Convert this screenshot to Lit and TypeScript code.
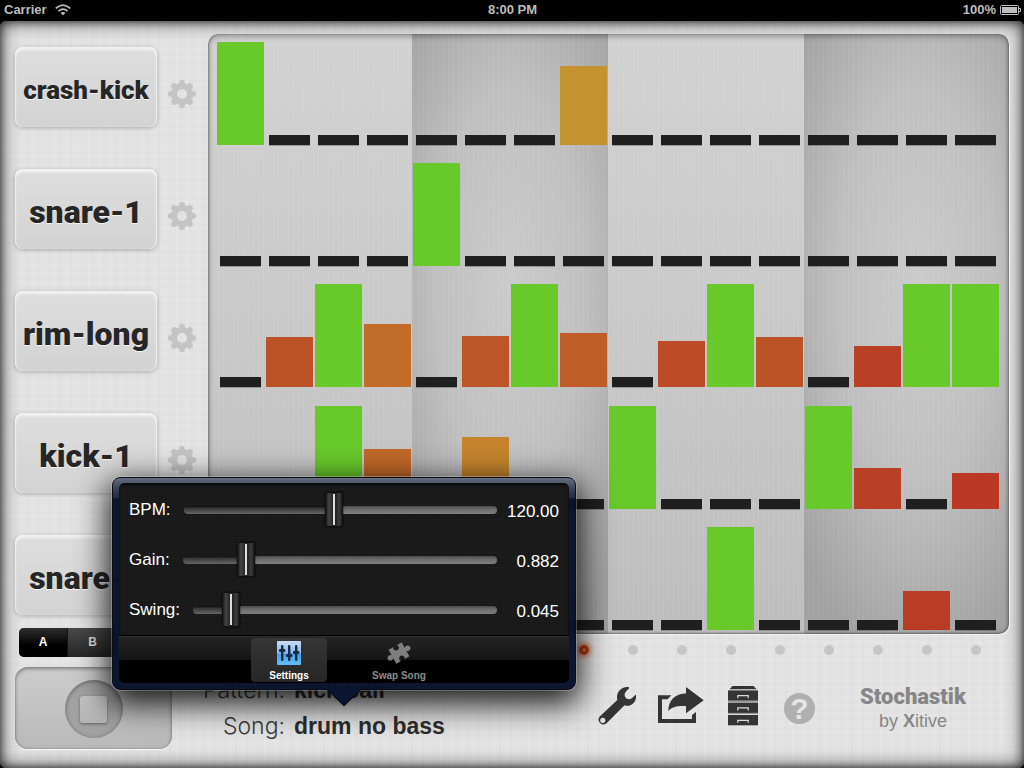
import { LitElement, html, svg, css } from "lit";
import { customElement, property, state } from "lit/decorators.js";
import { styleMap } from "lit/directives/style-map.js";
import { classMap } from "lit/directives/class-map.js";

type Step = { height: number; color: string };
type Track = { name: string; small?: boolean; steps: Record<number, Step> };

const FULL: Step = { height: 103, color: "#68c92a" };
const step = (height: number, color: string): Step => ({ height, color });

const TRACKS: Track[] = [
  { name: "crash-kick", small: true, steps: { 0: FULL, 7: step(79, "#c59230") } },
  { name: "snare-1", steps: { 4: FULL } },
  {
    name: "rim-long",
    steps: {
      1: step(50, "#bc5326"),
      2: FULL,
      3: step(63, "#c16c29"),
      5: step(51, "#bc5527"),
      6: FULL,
      7: step(54, "#be5d27"),
      9: step(46, "#bd4b25"),
      10: FULL,
      11: step(50, "#bc5326"),
      13: step(41, "#b94025"),
      14: FULL,
      15: FULL,
    },
  },
  {
    name: "kick-1",
    steps: {
      2: FULL,
      3: step(60, "#c16829"),
      5: step(72, "#c5842d"),
      8: FULL,
      12: FULL,
      13: step(41, "#b94025"),
      15: step(36, "#bb3825"),
    },
  },
  { name: "snare-2", steps: { 10: FULL, 14: step(39, "#b93c24") } },
];

const COLUMNS = Array.from({ length: 16 }, (_, i) => i);

const gearIcon = html`<svg viewBox="-14 -14 28 28" width="28" height="28" aria-hidden="true">
  <g fill="#c4c4c4">
    ${[0, 45, 90, 135, 180, 225, 270, 315].map(
      (a) => svg`<rect x="-2.8" y="-14" width="5.6" height="7" rx="2" transform="rotate(${a})" />`
    )}
    <path fill-rule="evenodd" d="M0-11A11 11 0 1 1 0 11A11 11 0 1 1 0-11ZM0-5A5 5 0 1 0 0 5A5 5 0 1 0 0-5Z" />
  </g>
</svg>`;

const wrenchIcon = html`<svg viewBox="0 0 38 38" width="38" height="38" aria-hidden="true">
  <path
    fill="#343434"
    fill-rule="evenodd"
    d="M31 .3C24-1 17.500 5 19.300 13L1.500 29.800A4.900 4.900 0 0 0 8.300 36.600L26.500 18.300C32.500 20.500 39 15.500 38 7.600L33.500 11.500Q31 13 28.500 11.500Q26 9.500 26.800 6.500Q27.500 4.500 31 1.600ZM4.800 30.700A2.600 2.600 0 1 1 4.800 35.900A2.600 2.600 0 1 1 4.800 30.700Z"
  />
</svg>`;

const shareIcon = html`<svg viewBox="0 0 46 38" width="46" height="38" aria-hidden="true">
  <g fill="#343434">
    <path d="M0 8.300H13.500L9.500 12.300H4V32H34V28L38 25V36H0Z" />
    <path d="M28 0L45.700 13.300L28 26.300V19C20 18.500 14 19.500 10.300 24C10.500 13 17 6.500 28 6.500Z" />
  </g>
</svg>`;

const cabinetIcon = html`<svg viewBox="0 0 34 40" width="34" height="40" aria-hidden="true">
  <path fill="#343434" d="M6.500 0H27.500L30.500 3.200H3.500Z" />
  ${[4.4, 16.6, 29].map(
    (y) => svg`<g transform="translate(2 ${y})">
      <rect width="30" height="10.300" fill="#343434" />
      <path d="M9.800 7.800V5.300H20.200V7.800" fill="none" stroke="#dcdcdc" stroke-width="1.200" />
    </g>`
  )}
  <path stroke="#8e8e8e" d="M2 15.300H32M2 27.600H32" />
</svg>`;

const mixerIcon = html`<svg viewBox="0 0 24 24" width="24" height="24" aria-hidden="true">
  <defs>
    <linearGradient id="mix" x1="0" y1="0" x2="0" y2="1">
      <stop offset="0" stop-color="#c9dcf6" />
      <stop offset=".5" stop-color="#86b9f0" />
      <stop offset=".55" stop-color="#4c9fea" />
      <stop offset="1" stop-color="#62bdf7" />
    </linearGradient>
  </defs>
  <rect width="24" height="24" rx="1" fill="url(#mix)" />
  <g fill="#182c48">
    <rect x="4" y="4" width="2.400" height="16" rx="1" />
    <rect x="11" y="4" width="2.400" height="16" rx="1" />
    <rect x="18" y="4" width="2.400" height="16" rx="1" />
    <rect x="2" y="8" width="6.400" height="3" rx="1" />
    <rect x="9" y="13" width="6.400" height="3" rx="1" />
    <rect x="16" y="10" width="6.400" height="3" rx="1" />
  </g>
</svg>`;

const puzzleIcon = html`<svg viewBox="0 0 28 24" width="28" height="24" aria-hidden="true">
  <path
    fill="#7e7e7e"
    transform="translate(14 12) rotate(-29)"
    d="M-7.500-8H-1.800A2.700 2.700 0 1 0 1.800-8H7.500V-1.500A2.800 2.800 0 1 1 7.500 1.500V8H1.800A2.700 2.700 0 1 0-1.800 8H-7.500V1.500A2.800 2.800 0 1 1-7.500-1.500Z"
  />
</svg>`;

const resets = css`
  * {
    box-sizing: border-box;
  }
  button {
    margin: 0;
    padding: 0;
    border: 0;
    background: none;
    font: inherit;
    color: inherit;
    cursor: pointer;
  }
  svg {
    display: block;
  }
`;

@customElement("status-bar")
export class StatusBar extends LitElement {
  static styles = css`
    :host {
      display: grid;
      grid-template-columns: 1fr auto 1fr;
      align-items: center;
      height: 21px;
      padding: 0 3px 2px 4px;
      background: #000;
      color: #bdbdbd;
      font: bold 13px/19px "Liberation Sans", Arial, sans-serif;
    }
    .side {
      display: flex;
      align-items: center;
      gap: 8px;
    }
    .right {
      justify-content: flex-end;
      gap: 4px;
    }
  `;
  render() {
    return html`
      <div class="side">
        <span>Carrier</span>
        <svg width="16" height="12" viewBox="0 0 16 12" aria-label="Wi-Fi">
          <g fill="none" stroke="#bdbdbd" stroke-width="1.800">
            <path d="M.8 4.400Q8-2.200 15.200 4.400" />
            <path d="M3.500 7.100Q8 3.200 12.500 7.100" />
          </g>
          <path fill="#bdbdbd" d="M5.500 8.800Q8 7 10.500 8.800L8 11.600Z" />
        </svg>
      </div>
      <span>8:00 PM</span>
      <div class="side right">
        <span>100%</span>
        <svg width="21" height="10" viewBox="0 0 21 10" aria-label="Battery">
          <rect x=".5" y=".5" width="18" height="9" rx="1" fill="none" stroke="#bdbdbd" />
          <rect x="2" y="2" width="15" height="6" fill="#bdbdbd" />
          <path d="M19 3.500H20.500V6.500H19" fill="none" stroke="#bdbdbd" />
        </svg>
      </div>
    `;
  }
}

@customElement("step-grid")
export class StepGrid extends LitElement {
  @property({ attribute: false }) tracks: Track[] = [];
  @property({ type: Number }) playhead = 0;

  static styles = [
    resets,
    css`
      :host {
        display: flex;
        flex-direction: column;
        padding-bottom: 2px;
      }
      .panel {
        display: grid;
        grid-template-rows: 111fr 121fr 121fr 122fr 121fr;
        flex: 1;
        padding: 0 9px 4px 8px;
        border-radius: 10px;
        background:
          repeating-linear-gradient(90deg, rgba(255, 255, 255, 0.06) 0 1px, transparent 1px 5px),
          radial-gradient(ellipse 75% 65% at 55% 42%, #cbcbcb, #c0c0c0 50%, #a2a2a2 100%) right / 205px 100% no-repeat,
          radial-gradient(ellipse 75% 65% at 50% 42%, #cbcbcb, #c0c0c0 50%, #a0a0a0 100%) 204px 0 / 196px 100% no-repeat,
          linear-gradient(#d2d2d2, #c9c9c9 50%, #bdbdbd);
        box-shadow:
          inset 0 2px 6px rgba(0, 0, 0, 0.35),
          inset 1px 0 2px rgba(0, 0, 0, 0.3),
          inset -1px -1px 2px rgba(0, 0, 0, 0.25),
          1px 1px 0 #f2f2f2;
      }
      .row,
      .leds {
        display: grid;
        grid-template-columns: repeat(16, 1fr);
      }
      .cell {
        display: flex;
        align-items: flex-end;
        padding: 0 1px;
      }
      .fill {
        width: 100%;
      }
      .rest {
        height: 10px;
        margin: 0 3px;
        background: #1f1f1f;
        box-shadow: 0 1px 0 rgba(0, 0, 0, 0.25);
      }
      .leds {
        margin-top: 11px;
        padding: 0 9px 0 8px;
        justify-items: center;
      }
      .led {
        width: 10px;
        height: 10px;
        border-radius: 50%;
        background: #c6c6c6;
      }
      .lit {
        background: radial-gradient(circle, #d99b3c 0, #b8391a 35%, #c8441c 70%);
        box-shadow: 0 0 5px 2px rgba(214, 84, 34, 0.7);
      }
    `,
  ];

  render() {
    return html`
      <div class="panel">
        ${this.tracks.map(
          (t) => html`<div class="row">
            ${COLUMNS.map((c) => {
              const s = t.steps[c];
              return html`<button class="cell" aria-label="${t.name} step ${c + 1}">
                ${s
                  ? html`<span class="fill" style=${styleMap({ height: s.height + "px", background: s.color })}></span>`
                  : html`<span class="fill rest"></span>`}
              </button>`;
            })}
          </div>`
        )}
      </div>
      <div class="leds">
        ${COLUMNS.map((c) => html`<span class=${classMap({ led: true, lit: c === this.playhead })}></span>`)}
      </div>
    `;
  }
}

@customElement("song-popover")
export class SongPopover extends LitElement {
  @state() private rows = [
    { id: "bpm", label: "BPM:", value: 120, max: 250, digits: 2 },
    { id: "gain", label: "Gain:", value: 0.882, max: 4.8, digits: 3 },
    { id: "swing", label: "Swing:", value: 0.045, max: 0.45, digits: 3 },
  ];

  private change(id: string, e: Event) {
    const value = Number((e.target as HTMLInputElement).value);
    this.rows = this.rows.map((r) => (r.id === id ? { ...r, value } : r));
  }

  static styles = [
    resets,
    css`
      :host {
        display: block;
        padding: 5px 6px 6px;
        border: 1px solid #0a0c14;
        border-radius: 8px;
        background: linear-gradient(#666d80, #3c455c 10px, #1f2942 20px, rgba(9, 18, 44, 0.98) 21px);
        box-shadow:
          0 0 0 1px rgba(255, 255, 255, 0.25),
          0 10px 32px 4px rgba(0, 0, 0, 0.9);
        font-family: "Liberation Sans", Arial, sans-serif;
      }
      .arrow {
        position: absolute;
        top: 100%;
        left: 50%;
        margin-left: -18px;
      }
      .body {
        overflow: hidden;
        border-radius: 6px;
        background: #000;
      }
      .settings {
        padding: 2px 10px 0;
        background:
          repeating-linear-gradient(90deg, rgba(255, 255, 255, 0.01) 0 1px, transparent 1px 3px),
          repeating-linear-gradient(rgba(255, 255, 255, 0.01) 0 1px, transparent 1px 3px),
          #181818;
        box-shadow: inset 0 2px 3px #080808;
      }
      .setting {
        display: flex;
        align-items: center;
        height: 50px;
        color: #fff;
        font-size: 17px;
      }
      .setting output {
        width: 62px;
        padding-top: 3px;
        text-align: right;
      }
      input {
        flex: 1;
        min-width: 0;
        height: 36px;
        margin: 0 0 0 13px;
        appearance: none;
        background: none;
      }
      input::-webkit-slider-runnable-track {
        height: 8px;
        border-radius: 4px;
        background:
          linear-gradient(#0a0a0a, #333 2px, #666) left / var(--done) 100% no-repeat,
          linear-gradient(#4a4a4a, #6a6a6a 3px, #808080);
      }
      input::-webkit-slider-thumb {
        appearance: none;
        width: 18px;
        height: 35px;
        margin-top: -14px;
        border: 1px solid #111;
        border-radius: 2px;
        background:
          linear-gradient(#ddd, #ddd) center / 2px 31px no-repeat,
          linear-gradient(90deg, #1c1c1c, #444 3px, #2c2c2c 6px, #222 10px, #3e3e3e 13px, #1c1c1c);
        box-shadow: 0 0 2px #000;
      }
      .tabs {
        display: flex;
        justify-content: center;
        gap: 34px;
        padding: 2px 0 1px;
        border-top: 1px solid #000;
        background: linear-gradient(#3a3a3a, #242424 1px, #151515 24px, #000 24px);
      }
      .tab {
        display: flex;
        flex-direction: column;
        align-items: center;
        justify-content: space-between;
        width: 76px;
        height: 44px;
        padding: 3px 0 0;
        border-radius: 4px;
        color: #8a8a8a;
        font: bold 10px/12px "Liberation Sans", Arial, sans-serif;
        white-space: nowrap;
      }
      .current {
        background: linear-gradient(#353535, #262626);
        color: #fff;
      }
    `,
  ];

  render() {
    return html`
      <div class="body">
        <div class="settings">
          ${this.rows.map(
            (r) => html`<div class="setting">
              <label for=${r.id}>${r.label}</label>
              <input
                id=${r.id}
                type="range"
                min="0"
                max=${r.max}
                step="any"
                .value=${String(r.value)}
                style=${styleMap({ "--done": (r.value / r.max) * 100 + "%" })}
                @input=${(e: Event) => this.change(r.id, e)}
              />
              <output for=${r.id}>${r.value.toFixed(r.digits)}</output>
            </div>`
          )}
        </div>
        <div class="tabs">
          <button class="tab current">${mixerIcon}<span>Settings</span></button>
          <button class="tab">${puzzleIcon}<span>Swap Song</span></button>
        </div>
      </div>
      <svg class="arrow" width="36" height="18" viewBox="0 0 36 18" aria-hidden="true">
        <path fill="#0b142e" d="M0 0H36L18 17Z" />
        <path fill="none" stroke="#05070f" d="M1 .5L18 17L35 .5" />
      </svg>
    `;
  }
}

@customElement("app-root")
export class AppRoot extends LitElement {
  static styles = [
    resets,
    css`
      :host {
        display: flex;
        flex-direction: column;
        min-height: 100vh;
        background: #000;
        color: #262626;
        font-family: "Liberation Sans", Arial, sans-serif;
      }
      .stage {
        position: relative;
        display: flex;
        flex-direction: column;
        flex: 1;
        padding: 13px 15px 19px;
        border-radius: 6px;
        background:
          repeating-linear-gradient(90deg, rgba(255, 255, 255, 0.1) 0 1px, transparent 1px 4px, rgba(0, 0, 0, 0.01) 4px 6px, transparent 6px 11px),
          repeating-linear-gradient(rgba(255, 255, 255, 0.1) 0 1px, transparent 1px 5px, rgba(0, 0, 0, 0.01) 5px 6px, transparent 6px 9px),
          #e3e3e3;
        box-shadow:
          inset 0 0 18px rgba(0, 0, 0, 0.85),
          inset 0 0 6px rgba(0, 0, 0, 0.5);
      }
      .upper {
        display: flex;
        flex: 1;
      }
      .side {
        width: 193px;
        padding-top: 13px;
      }
      .tracks {
        display: grid;
        gap: 42px;
        margin: 0;
        padding: 0;
        list-style: none;
      }
      .track {
        display: flex;
        align-items: center;
        gap: 11px;
        height: 80px;
      }
      .pad {
        width: 142px;
        height: 80px;
        padding-top: 6px;
        border-radius: 8px;
        background: linear-gradient(#dedede, #d3d3d3);
        box-shadow:
          inset 0 3px 3px rgba(255, 255, 255, 0.6),
          inset 1px 0 1px rgba(255, 255, 255, 0.5),
          inset -1px 0 1px rgba(255, 255, 255, 0.5),
          0 1px 4px rgba(0, 0, 0, 0.25);
        color: #262626;
        font: 900 32px/74px Roboto, "Liberation Sans", sans-serif;
        text-shadow: 0 1px 0 #f4f4f4;
        white-space: nowrap;
      }
      .small {
        font-size: 26px;
      }
      .gear {
        padding-top: 14px;
      }
      .segments {
        display: grid;
        grid-template-columns: 49px 49px;
        width: 98px;
        margin: 13px 0 0 4px;
        overflow: hidden;
        border-radius: 5px;
        background: linear-gradient(#4a4a4a, #262626);
        color: #ddd;
        font: bold 12px/29px "Liberation Sans", sans-serif;
      }
      .chosen {
        border-right: 1px solid #111;
        background: linear-gradient(#2e2e2e, #000 60%);
        color: #fff;
      }
      step-grid {
        flex: 1;
      }
      .lower {
        display: flex;
        align-items: center;
        margin-top: 10px;
      }
      .transport {
        display: grid;
        place-items: center;
        width: 157px;
        height: 82px;
        border-radius: 13px;
        background: linear-gradient(#cdcdcd, #b9b9b9);
        box-shadow:
          inset 0 2px 4px rgba(0, 0, 0, 0.35),
          inset 0 0 2px rgba(0, 0, 0, 0.3),
          0 1px 0 #f4f4f4;
      }
      .dial {
        display: grid;
        place-items: center;
        width: 58px;
        height: 58px;
        margin-top: 2px;
        border-radius: 50%;
        background: #a2a2a2;
        box-shadow: inset 0 1px 4px rgba(0, 0, 0, 0.4);
      }
      .stop {
        width: 27px;
        height: 27px;
        border-radius: 3px;
        background: linear-gradient(#c4c4c4, #b6b6b6);
        box-shadow: 0 1px 3px rgba(0, 0, 0, 0.4);
      }
      .info {
        display: grid;
        grid-template-columns: 113px auto;
        column-gap: 9px;
        flex: 1;
        margin: 0;
        font-size: 23px;
        line-height: 36px;
        white-space: nowrap;
      }
      .info dt {
        color: #3a3a3a;
        font-family: Inter, "Liberation Sans", sans-serif;
        font-weight: 300;
        text-align: right;
      }
      .info dd {
        margin: 0;
        color: #2c2c2c;
        font-weight: bold;
      }
      .tools {
        display: flex;
        align-items: center;
        gap: 22px;
        padding-bottom: 4px;
      }
      .help {
        width: 34px;
        padding: 4px 2px 0;
      }
      .mark {
        display: block;
        width: 31px;
        height: 31px;
        border-radius: 50%;
        background: #b0b0b0;
        color: #e6e6e6;
        font: bold 30px/32px "Liberation Sans", sans-serif;
      }
      .brand {
        width: 106px;
        margin: 0 43px 0 44px;
        color: #868686;
        text-align: center;
        font-size: 18px;
        line-height: 22px;
        white-space: nowrap;
      }
      .name {
        display: block;
        font: 900 22px/26px Roboto, "Liberation Sans", sans-serif;
      }
      song-popover {
        position: absolute;
        left: 112px;
        bottom: 78px;
        width: 464px;
      }
    `,
  ];

  render() {
    return html`
      <status-bar></status-bar>
      <main class="stage">
        <div class="upper">
          <div class="side">
            <ul class="tracks">
              ${TRACKS.map(
                (t) => html`<li class="track">
                  <button class=${classMap({ pad: true, small: !!t.small })}>${t.name}</button>
                  <button class="gear" aria-label="${t.name} options">${gearIcon}</button>
                </li>`
              )}
            </ul>
            <div class="segments">
              <button class="chosen">A</button>
              <button>B</button>
            </div>
          </div>
          <step-grid .tracks=${TRACKS} .playhead=${7}></step-grid>
        </div>
        <div class="lower">
          <button class="transport" aria-label="Stop"><span class="dial"><span class="stop"></span></span></button>
          <dl class="info">
            <dt>Pattern:</dt>
            <dd>kick ball</dd>
            <dt>Song:</dt>
            <dd>drum no bass</dd>
          </dl>
          <div class="tools">
            <button aria-label="Tools">${wrenchIcon}</button>
            <button aria-label="Share">${shareIcon}</button>
            <button aria-label="Library">${cabinetIcon}</button>
            <button class="help" aria-label="Help"><span class="mark">?</span></button>
          </div>
          <div class="brand"><span class="name">Stochastik</span>by <b>X</b>itive</div>
        </div>
        <song-popover></song-popover>
      </main>
    `;
  }
}
